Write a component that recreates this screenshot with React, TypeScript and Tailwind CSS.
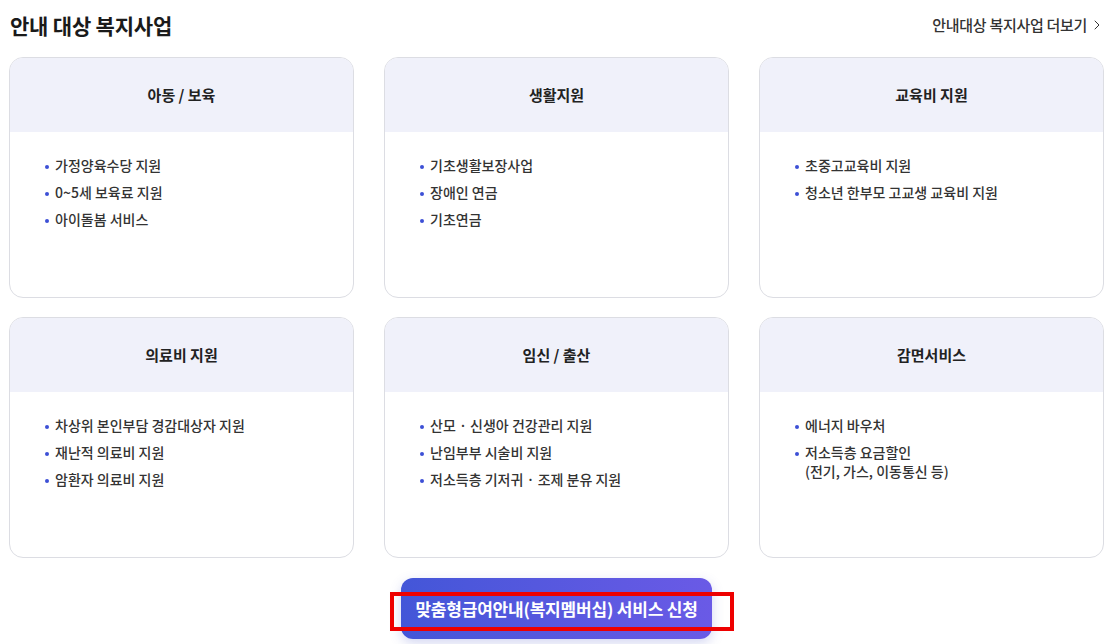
import { ChevronRight } from "lucide-react";

const categories = [
  { title: "아동 / 보육", items: ["가정양육수당 지원", "0~5세 보육료 지원", "아이돌봄 서비스"] },
  { title: "생활지원", items: ["기초생활보장사업", "장애인 연금", "기초연금"] },
  { title: "교육비 지원", items: ["초중고교육비 지원", "청소년 한부모 고교생 교육비 지원"] },
  { title: "의료비 지원", items: ["차상위 본인부담 경감대상자 지원", "재난적 의료비 지원", "암환자 의료비 지원"] },
  { title: "임신 / 출산", items: ["산모 · 신생아 건강관리 지원", "난임부부 시술비 지원", "저소득층 기저귀 · 조제 분유 지원"] },
  { title: "감면서비스", items: ["에너지 바우처", "저소득층 요금할인\n(전기, 가스, 이동통신 등)"] },
];

function CategoryCard({ title, items }: { title: string; items: string[] }) {
  return (
    <div className="h-[241px] overflow-hidden rounded-[14px] border border-[#dcdde3] bg-white">
      <div className="flex h-[74px] items-center justify-center bg-[#f0f1fa] text-[15px] font-bold text-[#222]">
        {title}
      </div>
      <ul className="flex flex-col gap-[8px] px-[35px] pt-[24px]">
        {items.map((item) => (
          <li key={item} className="flex items-start gap-[6px] text-[14px] leading-[19px] font-medium text-[#333]">
            <span className="mt-[9px] h-[4px] w-[4px] shrink-0 rounded-full bg-[#3d50d6]" />
            <span className="whitespace-pre-line">{item}</span>
          </li>
        ))}
      </ul>
    </div>
  );
}

export default function App() {
  return (
    <div
      className="h-[644px] w-[1113px] overflow-hidden bg-white"
      style={{ fontFamily: '"Noto Sans CJK KR", "Noto Sans", sans-serif' }}
    >
      {/* Section header */}
      <div className="flex h-[57px] items-start justify-between pr-[8px] pl-[10px] pt-[10px]">
        <h2 className="text-[21px] leading-[30px] font-bold tracking-[-0.2px] text-[#1a1a1a]">안내 대상 복지사업</h2>
        <a className="mt-[5px] flex items-center text-[15px] leading-[20px] font-medium tracking-[-0.3px] text-[#333]">
          안내대상 복지사업 더보기
          <ChevronRight className="ml-[2px] h-[16px] w-[16px]" strokeWidth={1.5} />
        </a>
      </div>

      {/* Cards */}
      <div className="grid grid-cols-3 gap-x-[30px] gap-y-[19px] px-[9px]">
        {categories.map((c) => (
          <CategoryCard key={c.title} title={c.title} items={c.items} />
        ))}
      </div>

      {/* Apply button */}
      <div className="mt-[20px] flex justify-center">
        <div className="relative">
          <button className="flex h-[61px] w-[311px] items-center justify-center rounded-[12px] bg-gradient-to-r from-[#4356d8] to-[#6a5ae6] text-[17px] font-bold tracking-[-0.2px] text-white shadow-[0_4px_12px_rgba(80,90,200,0.25)]">
            맞춤형급여안내(복지멤버십) 서비스 신청
          </button>
          <div className="pointer-events-none absolute top-[14px] left-[-11px] h-[39px] w-[344px] border-[4px] border-[#ee0000]" />
        </div>
      </div>
    </div>
  );
}
